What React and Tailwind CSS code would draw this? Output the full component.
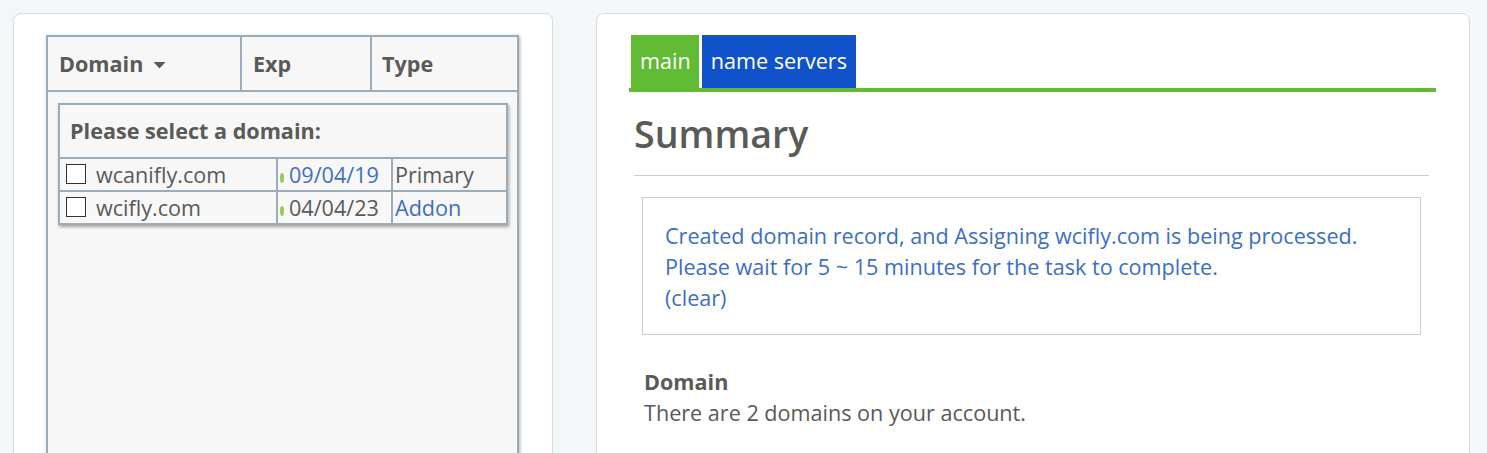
const ROWS = [
  { name: 'wcanifly.com', exp: '09/04/19', expLink: true, type: 'Primary', typeLink: false },
  { name: 'wcifly.com', exp: '04/04/23', expLink: false, type: 'Addon', typeLink: true },
];

const Dot = () => <span className="mr-[5px] mt-[6px] inline-block h-[10px] w-[4px] shrink-0 rounded-[50%] bg-[#98c858]" />;

const DomainList = () => (
  <div className="h-[500px] w-[473px] border-2 border-[#9badbb] bg-[#f7f7f7] shadow-[1px_1px_3px_rgba(0,0,0,0.3)]">
    <div className="flex h-[55px] border-b-2 border-[#9badbb] text-[21.6px] font-bold">
      <div className="flex w-[194px] items-center border-r-2 border-[#9badbb] pl-[11px] pt-[1px]">
        Domain
        <svg className="ml-[10px] mt-[2px]" width="13" height="7" viewBox="0 0 13 7">
          <path d="M0.5 0h12L6.5 6.5z" fill="#5a5a58" />
        </svg>
      </div>
      <div className="flex w-[130px] items-center border-r-2 border-[#9badbb] pl-[11px] pt-[1px]">Exp</div>
      <div className="flex flex-1 items-center pl-[10px] pt-[1px]">Type</div>
    </div>
    <div className="ml-[10px] mt-[11px] w-[450px] border-2 border-[#9badbb] shadow-[1px_2px_3px_rgba(0,0,0,0.35)]">
      <div className="flex h-[52px] items-center pl-[10px] text-[21.6px] font-bold">Please select a domain:</div>
      {ROWS.map((row) => (
        <div key={row.name} className="flex h-[33px] border-t-2 border-[#9badbb] text-[21.6px]">
          <div className="flex w-[218px] items-center border-r-2 border-[#9badbb] pl-[6px] pt-[1px]">
            <span className="mb-[3px] mr-[10px] h-[20px] w-[20px] border border-[#333] bg-white" />
            {row.name}
          </div>
          <div className="flex w-[115px] items-center border-r-2 border-[#9badbb] pl-[2px] pt-[1px]">
            <Dot />
            <span className={row.expLink ? 'text-[#3c6fc4]' : ''}>{row.exp}</span>
          </div>
          <div className={`flex flex-1 items-center pl-[2px] pt-[1px] ${row.typeLink ? 'text-[#3c6fc4]' : ''}`}>{row.type}</div>
        </div>
      ))}
    </div>
  </div>
);

const Summary = () => (
  <div>
    <div className="flex h-[57px] gap-[3px] border-b-4 border-[#62bb35] pl-[2px] text-[21.6px] text-white">
      <div className="flex h-[53px] items-center bg-[#62bb35] pl-[9px] pr-[8px]">main</div>
      <div className="flex h-[53px] items-center bg-[#0f52c9] px-[9px]">name servers</div>
    </div>
    <div className="ml-[5px] mr-[7px]">
      <h1 className="flex h-[84px] items-center border-b border-[#ccc] pt-[1px] text-[37.6px] font-semibold">Summary</h1>
      <div className="mx-[8px] mt-[21px] border border-[#ccc] px-[22px] pb-[21px] pt-[22px] text-[21.6px] leading-[31px] text-[#3c6fc4]">
        <p>Created domain record, and Assigning wcifly.com is being processed.</p>
        <p>Please wait for 5 ~ 15 minutes for the task to complete.</p>
        <p>(clear)</p>
      </div>
      <div className="ml-[10px] mt-[31px] text-[21.6px] leading-[31px]">
        <p className="font-bold">Domain</p>
        <p>There are 2 domains on your account.</p>
      </div>
    </div>
  </div>
);

export default function App() {
  return (
    <div className="flex h-[453px] gap-[43px] overflow-hidden bg-[#f4f7fa] pl-[13px] pt-[13px] text-[#5a5a58] font-['Open_Sans',sans-serif]">
      <div className="h-[500px] w-[540px] rounded-t-lg border border-[#d5dadd] bg-white pl-[32px] pt-[21px]">
        <DomainList />
      </div>
      <div className="h-[500px] w-[874px] rounded-t-lg border border-[#d5dadd] bg-white pl-[32px] pr-[33px] pt-[21px]">
        <Summary />
      </div>
    </div>
  );
}
